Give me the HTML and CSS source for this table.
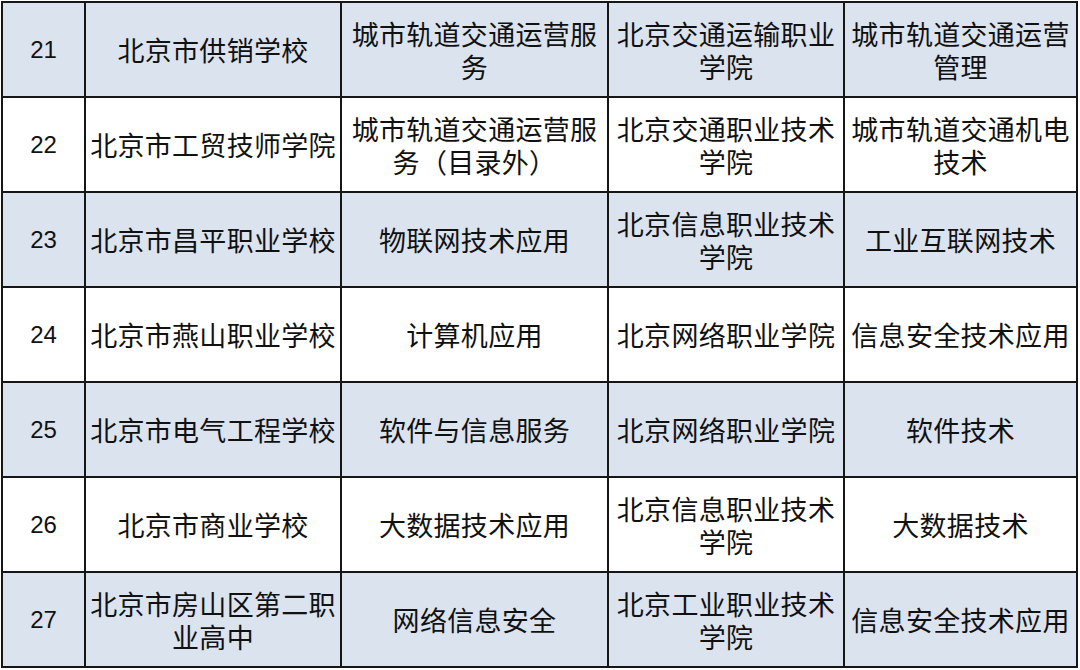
FILE: index.html
```html
<!DOCTYPE html>
<html lang="zh-CN">
<head>
<meta charset="utf-8">
<link rel="stylesheet" href="styles.css">
</head>
<body>
<div class="table">
  <div class="cell num shade">21</div>
  <div class="cell shade">北京市供销学校</div>
  <div class="cell shade">城市轨道交通运营服<br>务</div>
  <div class="cell shade">北京交通运输职业<br>学院</div>
  <div class="cell shade">城市轨道交通运营<br>管理</div>

  <div class="cell num">22</div>
  <div class="cell">北京市工贸技师学院</div>
  <div class="cell">城市轨道交通运营服<br>务（目录外）</div>
  <div class="cell">北京交通职业技术<br>学院</div>
  <div class="cell">城市轨道交通机电<br>技术</div>

  <div class="cell num shade">23</div>
  <div class="cell shade">北京市昌平职业学校</div>
  <div class="cell shade">物联网技术应用</div>
  <div class="cell shade">北京信息职业技术<br>学院</div>
  <div class="cell shade">工业互联网技术</div>

  <div class="cell num">24</div>
  <div class="cell">北京市燕山职业学校</div>
  <div class="cell">计算机应用</div>
  <div class="cell">北京网络职业学院</div>
  <div class="cell">信息安全技术应用</div>

  <div class="cell num shade">25</div>
  <div class="cell shade">北京市电气工程学校</div>
  <div class="cell shade">软件与信息服务</div>
  <div class="cell shade">北京网络职业学院</div>
  <div class="cell shade">软件技术</div>

  <div class="cell num">26</div>
  <div class="cell">北京市商业学校</div>
  <div class="cell">大数据技术应用</div>
  <div class="cell">北京信息职业技术<br>学院</div>
  <div class="cell">大数据技术</div>

  <div class="cell num shade">27</div>
  <div class="cell shade">北京市房山区第二职<br>业高中</div>
  <div class="cell shade">网络信息安全</div>
  <div class="cell shade">北京工业职业技术<br>学院</div>
  <div class="cell shade">信息安全技术应用</div>
</div>
</body>
</html>
```

FILE: styles.css
```css
html, body {
  margin: 0;
  padding: 0;
  background: #ffffff;
}

body {
  padding: 1px 0 0 1px;
}

.table {
  display: grid;
  grid-template-columns: 81px 254px 265px 234px 231px;
  grid-auto-rows: 93px;
  gap: 2px;
  padding: 2px;
  background: #161616;
  width: max-content;
}

.cell {
  background: #ffffff;
  display: flex;
  align-items: center;
  justify-content: center;
  text-align: center;
  font-family: "Noto Sans CJK SC", "Noto Sans", sans-serif;
  font-size: 27px;
  line-height: 33px;
  color: #111111;
  white-space: nowrap;
  letter-spacing: 0.3px;
}

.shade {
  background: #dbe3ef;
}

.num {
  font-family: "Liberation Sans", "Noto Sans CJK SC", sans-serif;
  font-size: 24px;
  letter-spacing: 0;
}
```
